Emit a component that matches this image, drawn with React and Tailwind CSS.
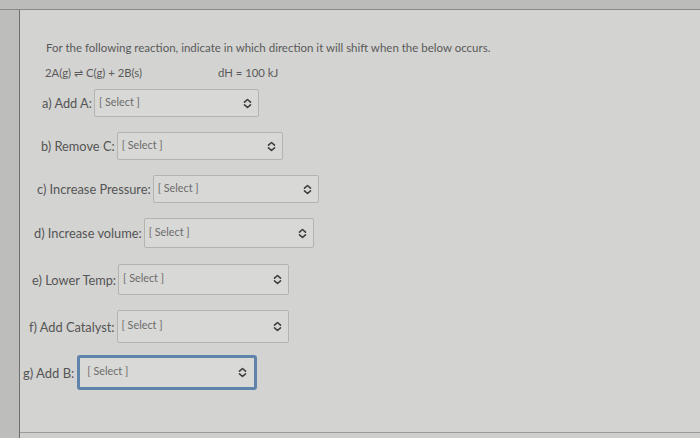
import React from "react";

const rows = [
    { label: "a) Add A:", pad: "pl-[22px]", top: "mt-[9px]", width: "w-[165px]", height: "h-[28px]" },
    { label: "b) Remove C:", pad: "pl-[21px]", top: "mt-[15px]", width: "w-[166px]", height: "h-[28px]" },
    { label: "c) Increase Pressure:", pad: "pl-[17px]", top: "mt-[15px]", width: "w-[166px]", height: "h-[28px]" },
    { label: "d) Increase volume:", pad: "pl-[14px]", top: "mt-[15px]", width: "w-[170px]", height: "h-[30px]" },
    { label: "e) Lower Temp:", pad: "pl-[12px]", top: "mt-[16px]", width: "w-[171px]", height: "h-[31px]" },
    { label: "f) Add Catalyst:", pad: "pl-[9px]", top: "mt-[15px]", width: "w-[172px]", height: "h-[33px]" },
];

const Chevrons = () => (
    <svg width="9" height="11" viewBox="0 0 9 11" fill="none" stroke="#3f3f3f" strokeWidth="1.6" strokeLinecap="round" strokeLinejoin="round">
        <path d="M1.5 4.2 L4.5 1.5 L7.5 4.2" />
        <path d="M1.5 6.8 L4.5 9.5 L7.5 6.8" />
    </svg>
);

const SelectBox = ({ width, height, focused }) => (
    <div
        className={
            focused
                ? "flex items-center justify-between h-[35px] w-[180px] rounded-[3px] border-[3px] border-[#5f83aa] bg-[#d9d9d7] pl-[7px] pr-[7px]"
                : `flex items-center justify-between ${height} ${width} rounded-[2px] border border-[#b3b3b1] bg-[#d8d8d6] pl-[4px] pr-[6px]`
        }
    >
        <span className="text-[10.8px] text-[#6b6b6b] -mt-[2px]">[ Select ]</span>
        <Chevrons />
    </div>
);

const App = () => {
    return (
        <div className="w-[700px] h-[438px] bg-[#c2c2c0] overflow-hidden flex flex-col font-['Lato','Open_Sans',sans-serif]">
            {/* top strip */}
            <div className="h-[10px] bg-[#bcbcba] border-b border-[#8a8a88] shrink-0" />

            <div className="flex flex-1 min-h-0">
                {/* left strip */}
                <div className="w-[20px] bg-[#bdbdbb] border-r border-[#6f6f6d] shrink-0" />

                {/* question panel */}
                <div className="flex-1 bg-[#d3d3d1] flex flex-col">
                    <div className="flex-1 pt-[30px] text-[#505050]">
                        <p className="pl-[26px] text-[11.5px] leading-[15px] text-[#5a5a5a]">
                            For the following reaction, indicate in which direction it will shift when the below occurs.
                        </p>

                        <div className="pl-[25px] mt-[10px] flex text-[11.3px] leading-[15px] text-[#5a5a5a]">
                            <span className="w-[173px]">2A(g) ⇌ C(g) + 2B(s)</span>
                            <span>dH = 100 kJ</span>
                        </div>

                        {rows.map((row, index) => (
                            <div key={index} className={`flex items-center ${row.pad} ${row.top}`}>
                                <span className="text-[12.8px] text-[#555555] mr-[2px] mt-[2px]">{row.label}</span>
                                <SelectBox width={row.width} height={row.height} />
                            </div>
                        ))}

                        <div className="flex items-center pl-[3px] mt-[12px]">
                            <span className="text-[13px] text-[#555555] mr-[3px] mt-[2px]">g) Add B:</span>
                            <SelectBox focused />
                        </div>
                    </div>
                    <div className="h-[6px] border-t border-[#9a9a98] bg-[#cfcfcd] shrink-0" />
                </div>
            </div>
        </div>
    );
};

export default App;
